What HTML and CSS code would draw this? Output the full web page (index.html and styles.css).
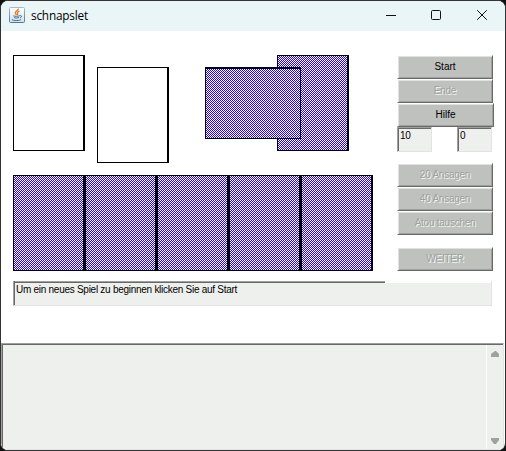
FILE: index.html
```
<!DOCTYPE html>
<html lang="de">
<head>
<meta charset="utf-8">
<title>schnapslet</title>
<link rel="stylesheet" href="styles.css">
</head>
<body>
<div class="window">
  <header class="titlebar">
    <svg class="app-icon" width="16" height="16" viewBox="0 0 16 16">
      <defs><linearGradient id="g" x1="0" y1="0" x2="0" y2="1"><stop offset="0" stop-color="#a4bccb"/><stop offset="1" stop-color="#4e7897"/></linearGradient>
      <linearGradient id="h" x1="0" y1="0" x2="0" y2="1"><stop offset="0" stop-color="#fff"/><stop offset="1" stop-color="#d4e0e8"/></linearGradient></defs>
      <rect x=".5" y=".5" width="15" height="15" rx="1" fill="url(#h)" stroke="url(#g)"/>
      <path d="M9.3 1.6C9.8 3.4 6 4.2 6.3 6C6.4 6.8 7.4 7.2 7.5 8M10.4 4.2C8.8 4.8 8 5.5 8.6 6.3C9 7 8.8 7.5 8.3 8" fill="none" stroke="#e8791d" stroke-width="1.3"/>
      <path d="M4.3 8.8C5.5 9.5 9.5 9.4 10.6 8.7M5 10.6C6.4 11.2 9 11.1 10 10.5M10.6 8.8C13.2 8 13.1 10.2 11 11M3.8 12.2C1.8 13 5 13.6 7.7 13.5C10.7 13.5 12.6 12.9 11.2 12.4" fill="none" stroke="#3b6c94" stroke-width="1"/>
    </svg>
    <span class="title">schnapslet</span>
    <svg class="controls" width="125" height="29" viewBox="0 0 125 29" fill="none" stroke="#111">
      <path d="M6 14.5H16"/>
      <rect x="51.5" y="9.5" width="9" height="9" rx="1"/>
      <path d="M97.2 9.2L106.8 18.8M106.8 9.2L97.2 18.8"/>
    </svg>
  </header>
  <main class="board">
    <div class="table">
      <div class="top">
        <div class="card"></div>
        <div class="card lower"></div>
        <div class="deck">
          <div class="card back trump"></div>
          <div class="card back sideways"></div>
        </div>
      </div>
      <div class="hand">
        <div class="card back"></div><div class="card back"></div><div class="card back"></div><div class="card back"></div><div class="card back"></div>
      </div>
    </div>
    <div class="side">
      <button class="btn">Start</button>
      <button class="btn" disabled>Ende</button>
      <button class="btn wide">Hilfe</button>
      <div class="scores"><div class="field">10</div><div class="field">0</div></div>
      <button class="btn" disabled>20 Ansagen</button>
      <button class="btn" disabled>40 Ansagen</button>
      <button class="btn" disabled>Atou tauschen</button>
      <button class="btn next" disabled>WEITER</button>
    </div>
  </main>
  <div class="message"><span>Um ein neues Spiel zu beginnen klicken Sie auf Start</span></div>
  <div class="log">
    <div class="scrollbar">
      <svg width="9" height="6" viewBox="0 0 9 6"><path d="M4 0H5L8 3V6H0V3Z" fill="#a0a19f"/></svg>
      <svg width="9" height="6" viewBox="0 0 9 6"><path d="M0 0H8V2L5 6H3L0 2Z" fill="#a0a19f"/></svg>
    </div>
  </div>
</div>
</body>
</html>
```

FILE: styles.css
```
* { box-sizing: border-box; }
html { background: #101010; }
body { margin: 0; font: 10px/12px "Liberation Sans", Arial, sans-serif; color: #000; }
.window {
  width: 506px; height: 451px; overflow: hidden;
  display: flex; flex-direction: column;
  border: 1px solid #333; border-radius: 8px; background: #fff;
}
.titlebar { height: 30px; flex: none; display: flex; background: #eaf5f8; }
.app-icon { margin: 6px 0 0 8px; }
.title { margin: 6px 0 0 6px; font: 11.8px/17px "Open Sans", "Noto Sans", sans-serif; letter-spacing: -0.2px; }
.controls { margin-left: auto; }
.board { display: flex; height: 250px; flex: none; padding: 24px 11px 0 12px; }
.table { width: 384px; flex: none; }
.top { display: flex; gap: 12px; height: 120px; }
.card { width: 72px; height: 96px; border: solid #000; border-width: 1px 2px 1px 1px; background: #fff; }
.lower { margin-top: 12px; }
.back { background: repeating-conic-gradient(#2800ff 0 25%, #fff 0 50%) 0 0 / 2px 2px; }
.deck { display: flex; margin-left: 24px; width: 144px; height: 96px; position: relative; }
.trump { margin-left: 72px; }
.sideways { position: absolute; left: 0; top: 12px; width: 96px; height: 72px; border-width: 2px 1px 1px 1px; }
.hand { display: flex; }
.side { width: 97px; flex: none; }
.btn {
  display: block; width: 96px; height: 24px; padding: 0; margin: 0;
  font: inherit; color: #000; text-align: center;
  border: 1px solid; border-color: #fff #696969 #696969 #fff;
  background: #bfc1be;
  box-shadow: inset 1px 1px #e0e2df, inset -1px -1px #a0a19f;
}
.btn:disabled { color: #a0a19f; text-shadow: 1px 1px #f4f5f4; letter-spacing: -0.25px; }
.wide { width: 97px; }
.next { margin-top: 12px; }
.scores { display: flex; justify-content: space-between; width: 95px; height: 36px; }
.field, .message, .log {
  background: #eef0ed; border: 1px solid; border-color: #a0a0a0 #e3e3e3 #e3e3e3 #a0a0a0;
  box-shadow: inset 1px 1px #696969;
}
.field { width: 35px; height: 25px; padding: 2px 2px; letter-spacing: -0.25px; }
.message {
  flex: none; width: 479px; height: 25px; margin: 0 0 0 12px; padding: 0;
  border-top: 0; box-shadow: inset 1px 0 #696969;
  background: linear-gradient(#a0a0a0 0 1px, #696969 1px 2px) 0 0 / 371px 2px no-repeat,
    linear-gradient(#fff, #fff) 0 0 / 100% 2px no-repeat, #eef0ed;
}
.message span { display: block; padding: 3px 0 0 2px; letter-spacing: -0.27px; }
.log { flex: none; width: 503px; height: 107px; margin-top: 37px; display: flex; justify-content: flex-end; }
.scrollbar {
  width: 17px; border-left: 1px solid #fff; margin-top: 1px;
  display: flex; flex-direction: column; justify-content: space-between; padding: 6px 0 5px 4px;
}
```
